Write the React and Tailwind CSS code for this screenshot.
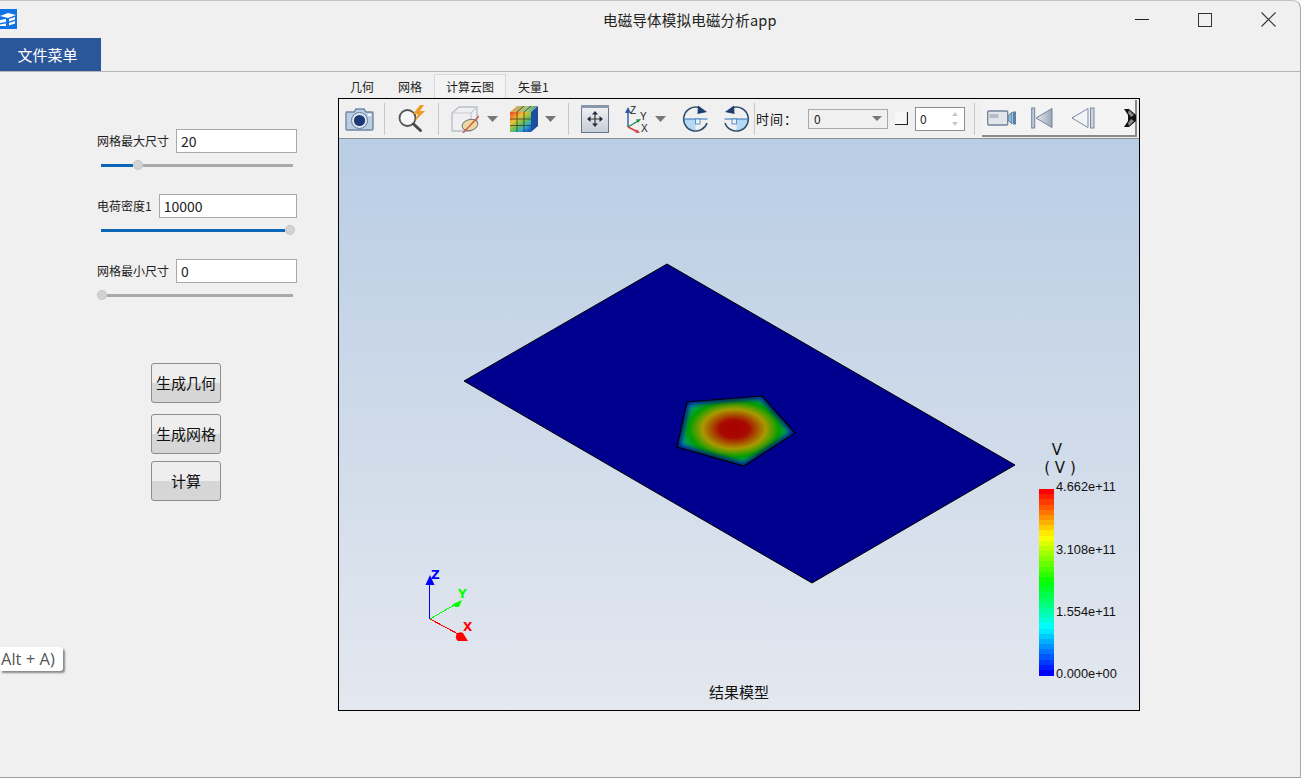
import React from 'react';

const cjk = "font-['Noto_Sans_CJK_SC','Noto_Sans',sans-serif]";

const sliders = [
  { label: '网格最大尺寸', value: '20', filled: 32, rest: true },
  { label: '电荷密度1', value: '10000', filled: 184, rest: false },
  { label: '网格最小尺寸', value: '0', filled: 0, rest: true },
];

const tabs = ['几何', '网格', '计算云图', '矢量1'];

// legend colour bands, top to bottom
const stops = [
  [255, 0, 0],
  [255, 255, 0],
  [0, 255, 0],
  [0, 255, 255],
  [0, 0, 255],
];
const bands = Array.from({ length: 36 }, (_, i) => {
  const t = (i / 35) * 4;
  const k = Math.min(Math.floor(t), 3);
  const f = t - k;
  const c = stops[k].map((v, j) => Math.round(v + (stops[k + 1][j] - v) * f));
  return `rgb(${c[0]},${c[1]},${c[2]})`;
});

const Sep = ({ ml }) => <div className="w-px h-[32px] bg-[#c8c8c8] shrink-0" style={{ marginLeft: ml }} />;

const Arrow = ({ ml }) => (
  <svg width="11" height="6" viewBox="0 0 11 6" className="shrink-0" style={{ marginLeft: ml }}>
    <path d="M0 0h11L5.500 6z" fill="#777" />
  </svg>
);

const CameraIcon = () => (
  <svg width="29" height="26" viewBox="0 0 29 26" className="ml-[6px] shrink-0">
    <path d="M1 6h8l2-3h8l2 3h6a1 1 0 0 1 1 1v16a1 1 0 0 1-1 1H2a1 1 0 0 1-1-1V7a1 1 0 0 1 1-1z" fill="#b9cde3" stroke="#6f86a5" strokeWidth="1.400" />
    <circle cx="14.500" cy="14.500" r="8" fill="#dfe7f1" stroke="#64789a" />
    <circle cx="14.500" cy="14.500" r="5.600" fill="#1d3a78" />
    <rect x="23" y="8" width="3" height="2" fill="#fff" />
  </svg>
);

const ZoomIcon = () => (
  <svg width="31" height="28" viewBox="0 0 31 28" className="ml-[12px] shrink-0">
    <circle cx="10.500" cy="13" r="8" fill="#f4f6f8" stroke="#555" strokeWidth="1.800" />
    <path d="M16.500 19l7 6.500" stroke="#4a4a4a" strokeWidth="3" strokeLinecap="round" />
    <path d="M23 0l-7 9h5l-3 7 10-10h-5l4-6z" fill="#ef9a25" />
  </svg>
);

const SliceCubeIcon = () => (
  <svg width="28" height="28" viewBox="0 0 28 28" className="ml-[12px] shrink-0">
    <path d="M1 8l7-6h18v17l-6 7H1z" fill="#f0f0f2" stroke="#b9bfc9" strokeWidth="1.400" />
    <path d="M1 8h19v18M20 8l6-6" fill="none" stroke="#c4c9d2" strokeWidth="1.200" />
    <ellipse cx="19" cy="20" rx="8" ry="5.500" fill="#ecd9a0" stroke="#70757f" transform="rotate(-15 19 20)" />
    <path d="M12 28L28 11" stroke="#d2553c" strokeWidth="1.400" />
  </svg>
);

const ColorCubeIcon = () => (
  <svg width="28" height="28" viewBox="0 0 28 28" className="ml-[12px] shrink-0">
    <defs>
      <linearGradient id="cubeFront" x1="0" y1="0" x2="0.800" y2="1">
        <stop offset="0" stopColor="#e8402c" />
        <stop offset="0.350" stopColor="#f0c030" />
        <stop offset="0.600" stopColor="#70c050" />
        <stop offset="0.800" stopColor="#30b0c8" />
        <stop offset="1" stopColor="#2060c8" />
      </linearGradient>
      <linearGradient id="cubeTop" x1="0" y1="0" x2="1" y2="0">
        <stop offset="0" stopColor="#e89a50" />
        <stop offset="0.600" stopColor="#a0c878" />
        <stop offset="1" stopColor="#50a090" />
      </linearGradient>
    </defs>
    <path d="M0 7L7 1h21l-7 6z" fill="url(#cubeTop)" />
    <path d="M21 7l7-6v20l-7 6z" fill="#1c4f9c" />
    <rect x="0" y="7" width="21" height="20" fill="url(#cubeFront)" />
    <path d="M7 7v20M14 7v20M0 14h21M0 20.500h21M7 7l7-6M14 7l7-6" stroke="#2c2c2c" strokeWidth="0.700" />
  </svg>
);

const FitIcon = () => (
  <svg width="28" height="28" viewBox="0 0 28 28" className="ml-[12px] shrink-0">
    <defs>
      <linearGradient id="fitBg" x1="0" y1="0" x2="0" y2="1">
        <stop offset="0" stopColor="#f2f3f5" />
        <stop offset="1" stopColor="#c6ccd6" />
      </linearGradient>
    </defs>
    <rect x="0.500" y="0.500" width="27" height="27" fill="url(#fitBg)" stroke="#66778f" />
    <rect x="0" y="0" width="28" height="3" fill="#8a97aa" />
    <path d="M14 8v12M8 14h12" stroke="#333" strokeWidth="1.200" />
    <path d="M14 6l-3 3.500h6zM14 22l-3-3.500h6zM6 14l3.500-3v6zM22 14l-3.500-3v6z" fill="#1f2c40" />
  </svg>
);

const AxesIcon = () => (
  <svg width="25" height="28" viewBox="0 0 25 28" className="ml-[15px] shrink-0">
    <path d="M4 22V6" stroke="#2a5aa8" strokeWidth="1.400" />
    <path d="M4 2L1 8h6z" fill="#2a5aa8" />
    <path d="M4 22l10-6" stroke="#1c8a48" strokeWidth="1.400" />
    <path d="M17 14l-5 .500 2 3.500z" fill="#1c8a48" />
    <path d="M4 22l10 5" stroke="#d83a3a" strokeWidth="1.400" />
    <path d="M16 28l-5-.500 2-3z" fill="#d83a3a" />
    <text x="6" y="9" fontSize="10" fontFamily="Liberation Sans" fill="#222">Z</text>
    <text x="16" y="15" fontSize="10" fontFamily="Liberation Sans" fill="#222">Y</text>
    <text x="17" y="27" fontSize="10" fontFamily="Liberation Sans" fill="#222">X</text>
  </svg>
);

const RotateIcon = ({ flip, ml }) => (
  <svg width="27" height="27" viewBox="0 0 27 27" className="shrink-0" style={{ marginLeft: ml, transform: flip ? 'scaleX(-1)' : undefined }}>
    <path d="M1.500 14H13.500V26A12 12 0 0 1 1.500 14z" fill="#b5d9f4" />
    <path d="M25 18A12 12 0 1 1 17 2.500" fill="none" stroke="#33506f" strokeWidth="1.600" />
    <path d="M1.500 14H25.500" stroke="#3d7cc0" strokeWidth="1.100" />
    <rect x="13.500" y="14" width="4.500" height="5" fill="#e8f3fb" stroke="#3d7cc0" strokeWidth="0.800" />
    <path d="M16 0.500l9 6.500-9.500 2z" fill="#1f3f70" />
  </svg>
);

const CornerIcon = () => (
  <svg width="13" height="13" viewBox="0 0 13 13" className="ml-[7px] shrink-0">
    <rect width="13" height="13" fill="#f7f7f7" />
    <path d="M0 12.500h12.500V0" fill="none" stroke="#222" strokeWidth="1.200" />
  </svg>
);

const VideoIcon = () => (
  <svg width="30" height="16" viewBox="0 0 30 16" className="ml-[5px] shrink-0">
    <rect x="0.700" y="1" width="20" height="14" rx="1" fill="#e2e5ea" stroke="#71829c" strokeWidth="1.300" />
    <rect x="2.500" y="4" width="9" height="4" fill="#b5bcc7" />
    <path d="M21 6l4-4v12l-4-4z" fill="#8fb8d8" stroke="#5f7fa2" />
    <rect x="26" y="1.500" width="3" height="13" fill="#5b82a8" />
  </svg>
);

const FirstIcon = () => (
  <svg width="22" height="22" viewBox="0 0 22 22" className="ml-[14px] shrink-0">
    <defs>
      <linearGradient id="stepA" x1="0" x2="1" y1="0" y2="0">
        <stop offset="0" stopColor="#e8ebef" />
        <stop offset="1" stopColor="#9aa6b6" />
      </linearGradient>
    </defs>
    <rect x="0.700" y="1" width="3" height="20" fill="#c2cad5" stroke="#71829c" strokeWidth="1" />
    <path d="M21 1.500v19L5 11z" fill="url(#stepA)" stroke="#71829c" />
  </svg>
);

const PrevIcon = () => (
  <svg width="24" height="22" viewBox="0 0 24 22" className="ml-[18px] shrink-0">
    <path d="M17 1.500v19L1 11z" fill="#f2f4f6" stroke="#7a8ba5" />
    <rect x="19.500" y="1" width="3.500" height="20" fill="#cdd4de" stroke="#7a8ba5" />
  </svg>
);

const ClippedIcon = () => (
  <svg width="12" height="20" viewBox="0 0 12 20" className="ml-[29px] shrink-0">
    <path d="M0 1h5l7 6v6l-7 6H0l4-6V7z" fill="#111" />
    <path d="M5 2l5 5-3 2-3-4zM5 18l5-5-3-2-3 4z" fill="#888" />
  </svg>
);

const Slider = ({ filled, rest }) => (
  <div className="flex items-center h-[10px] w-[200px] mt-[7px] ml-[-1px]">
    {filled > 0 ? <div className="h-[3px] bg-[#0b66b7] ml-[5px] shrink-0" style={{ width: filled }} /> : null}
    <div className={`w-[10px] h-[10px] rounded-full bg-[#d2d2d2] border border-dotted border-[#bbb] shrink-0 ${filled > 0 ? '' : 'ml-[1px]'}`} />
    {rest ? <div className="h-[3px] flex-1 bg-[#a9a9a9] mr-[3px]" /> : null}
  </div>
);

const Btn = ({ children, className }) => (
  <div className={`w-[70px] h-[40px] flex items-center justify-center rounded-[3px] border border-[#8c8c8c] bg-[linear-gradient(to_bottom,#eeeeee_0%,#eeeeee_50%,#d6d6d6_50%,#d6d6d6_100%)] text-[15px] text-[#111] ${className}`}>
    {children}
  </div>
);

const Viewport3D = () => (
  <svg viewBox="339 139 800 571" width="800" height="571" className="block">
    <defs>
      <clipPath id="penta">
        <path d="M687 402L762 396L795 433L744 466L677 447Z" />
      </clipPath>
      <radialGradient id="heat" gradientUnits="userSpaceOnUse" cx="0" cy="0" r="1" gradientTransform="translate(734 429) scale(66 41)">
        <stop offset="0" stopColor="#a80000" />
        <stop offset="0.220" stopColor="#a80a00" />
        <stop offset="0.480" stopColor="#a89a00" />
        <stop offset="0.680" stopColor="#00a000" />
        <stop offset="0.880" stopColor="#00a0a0" />
        <stop offset="1" stopColor="#0070a8" />
      </radialGradient>
      <filter id="edgeBlur" x="-20%" y="-20%" width="140%" height="140%">
        <feGaussianBlur stdDeviation="2.500" />
      </filter>
    </defs>
    <path d="M667 264L1015 465L812 583L464 381Z" fill="#00008f" stroke="#000" strokeWidth="1" />
    <g clipPath="url(#penta)">
      <rect x="670" y="390" width="130" height="80" fill="url(#heat)" />
      <path d="M687 402L762 396L795 433L744 466L677 447Z" fill="none" stroke="#00008f" strokeWidth="5" filter="url(#edgeBlur)" />
    </g>
    <path d="M687 402L762 396L795 433L744 466L677 447Z" fill="none" stroke="#000" strokeWidth="1.200" />
    {/* triad */}
    <path d="M429.500 619V585" stroke="#0000ff" />
    <path d="M430 575l-4.500 10h9z" fill="#0000ff" />
    <path d="M430 619l26-15" stroke="#00ff00" shapeRendering="crispEdges" />
    <path d="M453 604l9-4-3 7h-4z" fill="#00ff00" />
    <path d="M430 619l30 16" stroke="#ff0000" shapeRendering="crispEdges" />
    <path d="M463 633l5 8h-10a4 4 0 0 1 5-8z" fill="#ff0000" />
    <text x="431" y="579" fontSize="12" fontWeight="700" fontFamily="DejaVu Sans" fill="#0000ff">Z</text>
    <text x="458" y="598" fontSize="12" fontWeight="700" fontFamily="DejaVu Sans" fill="#00ff00">Y</text>
    <text x="463" y="631" fontSize="12" fontWeight="700" fontFamily="DejaVu Sans" fill="#ff0000">X</text>
    {/* legend bar */}
    {bands.map((c, i) => (
      <rect key={i} x="1039" y={489 + (i * 186) / 36} width="15" height={186 / 36 + 0.500} fill={c} shapeRendering="crispEdges" />
    ))}
  </svg>
);

export default function App() {
  return (
    <div className={`w-[1302px] h-[779px] bg-white overflow-hidden ${cjk}`}>
      <div className="relative w-[1301px] h-[778px] bg-[#f0f0f0] border-t border-t-[#c4c4c4] border-r border-r-[#a8a8a8] border-b border-b-[#a0a0a0] rounded-tr-[8px] flex flex-col">
        {/* title bar */}
        <div className="h-[37px] flex items-center shrink-0">
          <svg width="17" height="20" viewBox="0 0 17 20" className="shrink-0 mb-[1px]">
            <rect width="17" height="20" fill="#1273e6" />
            <path d="M0 7l8-3 8 2-8 3zM0 11l6-1v3l-6 1zM9 10l6-2v2.500l-6 2zM9 14l6-2v2.500l-6 2zM0 15.500l6-1v2.500H0z" fill="#fff" />
          </svg>
          <div className="ml-[586px] w-[200px] text-[14.500px] tracking-[0.200px] text-[#222] whitespace-nowrap">电磁导体模拟电磁分析app</div>
          <div className="ml-[332px] flex items-center">
            <div className="w-[14px] h-px bg-[#222]" />
            <div className="ml-[49px] w-[14px] h-[14px] border border-[#333]" />
            <svg width="15" height="15" viewBox="0 0 15 15" className="ml-[49px]">
              <path d="M0.500 0.500l14 14M14.500 0.500l-14 14" stroke="#333" strokeWidth="1.100" />
            </svg>
          </div>
        </div>

        {/* file menu */}
        <div className="h-[33px] shrink-0">
          <div className="w-[101px] h-[33px] bg-[#2b579a] text-white text-[15px] flex items-center justify-center pr-[6px] pt-[2px]">文件菜单</div>
        </div>
        <div className="h-px shrink-0 bg-[#b4b4b4]" />

        <div className="flex flex-1 min-h-0">
          {/* left params */}
          <div className="w-[338px] shrink-0 pt-[57px] pl-[97px]">
            {sliders.map((s, i) => (
              <div key={i} className="w-[200px] h-[65px]">
                <div className="flex items-center gap-[7px]">
                  <span className="text-[12px] text-[#222] whitespace-nowrap">{s.label}</span>
                  <div className="flex-1 h-[24px] bg-white border border-[#a9a9a9] text-[14px] text-[#222] pl-[4px] flex items-center">{s.value}</div>
                </div>
                <Slider filled={s.filled} rest={s.rest} />
              </div>
            ))}
            <div className="ml-[54px] mt-[39px]">
              <Btn>生成几何</Btn>
              <Btn className="mt-[11px]">生成网格</Btn>
              <Btn className="mt-[7px]">计算</Btn>
            </div>
          </div>

          {/* right: tabs + viewport */}
          <div className="flex flex-col">
            <div className="flex h-[24px] mt-[2px] text-[12px] text-[#222]">
              {tabs.map((t) => (
                <div
                  key={t}
                  className={
                    t === '计算云图'
                      ? 'px-[11px] pt-px flex items-center whitespace-nowrap bg-[#f3f3f3] border border-b-0 border-[#d8d8d8]'
                      : 'px-[12px] pt-[2px] flex items-center whitespace-nowrap'
                  }
                >
                  {t}
                </div>
              ))}
            </div>
            <div className="w-[802px] h-[613px] border border-black flex flex-col">
              <div className="h-[40px] shrink-0 flex items-center bg-[#f0f0f0] border-b border-b-[#8f8f8f]">
                <CameraIcon />
                <Sep ml="10px" />
                <ZoomIcon />
                <Sep ml="10px" />
                <SliceCubeIcon />
                <Arrow ml="8px" />
                <ColorCubeIcon />
                <Arrow ml="7px" />
                <Sep ml="12px" />
                <FitIcon />
                <AxesIcon />
                <Arrow ml="6px" />
                <RotateIcon ml="16px" />
                <RotateIcon flip ml="14px" />
                <Sep ml="4px" />
                <span className="ml-[1px] text-[13px] text-[#111] w-[52px] whitespace-nowrap tracking-[1px]">时间：</span>
                <div className="w-[80px] h-[20px] border border-[#a9a9a9] flex items-center justify-between px-[5px] text-[12px] text-[#222] bg-[#f0f0f0]">
                  0
                  <svg width="10" height="5" viewBox="0 0 10 5"><path d="M0 0h10L5 5z" fill="#777" /></svg>
                </div>
                <CornerIcon />
                <div className="ml-[7px] w-[50px] h-[24px] bg-white border border-[#8e8e8e] flex items-center justify-between pl-[4px] pr-[6px] text-[12px] text-[#222]">
                  0
                  <svg width="6" height="14" viewBox="0 0 6 14"><path d="M3 0l3 4H0zM3 14l3-4H0z" fill="#c8c8c8" /></svg>
                </div>
                <Sep ml="9px" />
                <div className="ml-[7px] w-[155px] h-[37px] flex items-center bg-[#f3f3f3] border-b-2 border-b-[#8a8a8a] border-r-2 border-r-[#8a8a8a]">
                  <VideoIcon />
                  <FirstIcon />
                  <PrevIcon />
                  <ClippedIcon />
                </div>
              </div>
              <div className="relative flex-1 overflow-hidden bg-[linear-gradient(to_bottom,#b9cde4,#e4e8ef)]">
                <Viewport3D />
                <div className="absolute left-[711px] top-[302px] w-[14px] text-center text-[15px] leading-[18px] text-[#111] font-['DejaVu_Sans',sans-serif]">V</div>
                <div className="absolute left-[705px] top-[320px] w-[32px] text-center text-[15px] leading-[18px] text-[#111] font-['DejaVu_Sans',sans-serif] whitespace-nowrap">( V )</div>
                <div className="absolute left-[717px] top-[341px] text-[12.800px] leading-[14px] text-[#111] font-['Liberation_Sans',sans-serif]">4.662e+11</div>
                <div className="absolute left-[717px] top-[404px] text-[12.800px] leading-[14px] text-[#111] font-['Liberation_Sans',sans-serif]">3.108e+11</div>
                <div className="absolute left-[717px] top-[466px] text-[12.800px] leading-[14px] text-[#111] font-['Liberation_Sans',sans-serif]">1.554e+11</div>
                <div className="absolute left-[717px] top-[528px] text-[12.800px] leading-[14px] text-[#111] font-['Liberation_Sans',sans-serif]">0.000e+00</div>
                <div className="absolute left-[370px] top-[544px] text-[15px] leading-[18px] text-[#111]">结果模型</div>
              </div>
            </div>
          </div>
        </div>

        {/* leftover tooltip */}
        <div className="absolute left-0 top-[646px] w-[63px] h-[24px] bg-white rounded-r-[3px] shadow-[2px_2px_2px_#8a8a8a] text-[16.500px] text-[#555] pl-[1px] flex items-center font-['Open_Sans',sans-serif] whitespace-nowrap">
          Alt + A)
        </div>
      </div>
    </div>
  );
}
